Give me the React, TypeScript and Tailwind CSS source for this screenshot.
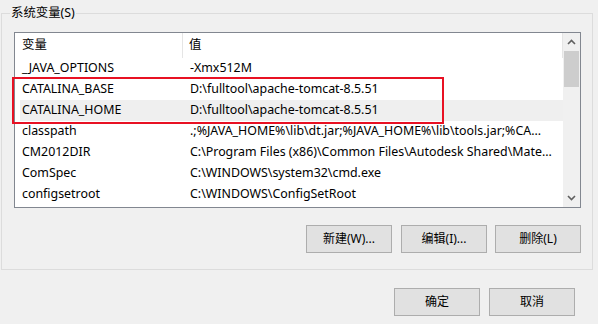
// System environment variables dialog (Windows style)
import React from 'react';

type Row = { name: string; value: string };

const rows: Row[] = [
  { name: '_JAVA_OPTIONS', value: '-Xmx512M' },
  { name: 'CATALINA_BASE', value: 'D:\\fulltool\\apache-tomcat-8.5.51' },
  { name: 'CATALINA_HOME', value: 'D:\\fulltool\\apache-tomcat-8.5.51' },
  { name: 'classpath', value: '.;%JAVA_HOME%\\lib\\dt.jar;%JAVA_HOME%\\lib\\tools.jar;%CA...' },
  { name: 'CM2012DIR', value: 'C:\\Program Files (x86)\\Common Files\\Autodesk Shared\\Mate...' },
  { name: 'ComSpec', value: 'C:\\WINDOWS\\system32\\cmd.exe' },
  { name: 'configsetroot', value: 'C:\\WINDOWS\\ConfigSetRoot' },
];

const font = { fontFamily: '"Noto Sans", "Noto Sans CJK SC", sans-serif' };

function Btn({ label }: { label: string }) {
  return (
    <button className="w-[86px] h-[28px] bg-[#e1e1e1] border border-[#adadad] text-[12px] text-black flex items-center justify-center">
      {label}
    </button>
  );
}

export default function App() {
  return (
    <div className="w-[598px] h-[324px] bg-[#f0f0f0] text-[12.4px] text-black overflow-hidden" style={font}>
      <div className="relative ml-[1px] mt-[13px] w-[592px] h-[257px] border border-[#dcdcdc] pl-[12px] pt-[18px]">
        <span className="absolute left-[8px] -top-[9px] px-[1px] bg-[#f0f0f0] leading-[16px]">系统变量(S)</span>

        <div className="relative w-[567px] h-[176px] bg-white border border-[#828790] flex">
          <div className="flex-1 flex flex-col">
            <div className="h-[25px] flex items-center shrink-0">
              <div className="w-[168px] h-full pl-[7px] flex items-center border-r border-[#e5e5e5]">变量</div>
              <div className="flex-1 h-full pl-[6px] flex items-center border-r border-[#e5e5e5]">值</div>
            </div>
            {rows.map((r, i) => (
              <div key={r.name} className={`h-[21px] ml-[5px] flex items-center whitespace-nowrap ${i === 2 ? 'bg-[#efefef]' : ''}`}>
                <div className="w-[170px] pl-[2px]">{r.name}</div>
                <div className="flex-1">{r.value}</div>
              </div>
            ))}
          </div>

          <div className="w-[17px] bg-[#f0f0f0] flex flex-col items-center">
            <div className="h-[18px] w-full flex items-center justify-center">
              <svg width="9" height="6" viewBox="0 0 9 6"><path d="M1 5 L4.5 1.5 L8 5" fill="none" stroke="#606060" strokeWidth="1.6" /></svg>
            </div>
            <div className="w-[15px] h-[36px] bg-[#cdcdcd]" />
            <div className="flex-1" />
            <div className="h-[18px] w-full flex items-center justify-center">
              <svg width="9" height="6" viewBox="0 0 9 6"><path d="M1 1 L4.5 4.5 L8 1" fill="none" stroke="#606060" strokeWidth="1.6" /></svg>
            </div>
          </div>

          <div className="absolute left-[-3px] top-[44px] w-[432px] h-[47px] border-2 border-[#e81123] pointer-events-none" />
        </div>

        <div className="w-[567px] mt-[17px] flex justify-end">
          <Btn label="新建(W)..." />
          <div className="w-[9px]" />
          <Btn label="编辑(I)..." />
          <div className="w-[8px]" />
          <Btn label="删除(L)" />
        </div>
      </div>

      <div className="w-[575px] mt-[18px] flex justify-end">
        <Btn label="确定" />
        <div className="w-[9px]" />
        <Btn label="取消" />
      </div>
    </div>
  );
}
